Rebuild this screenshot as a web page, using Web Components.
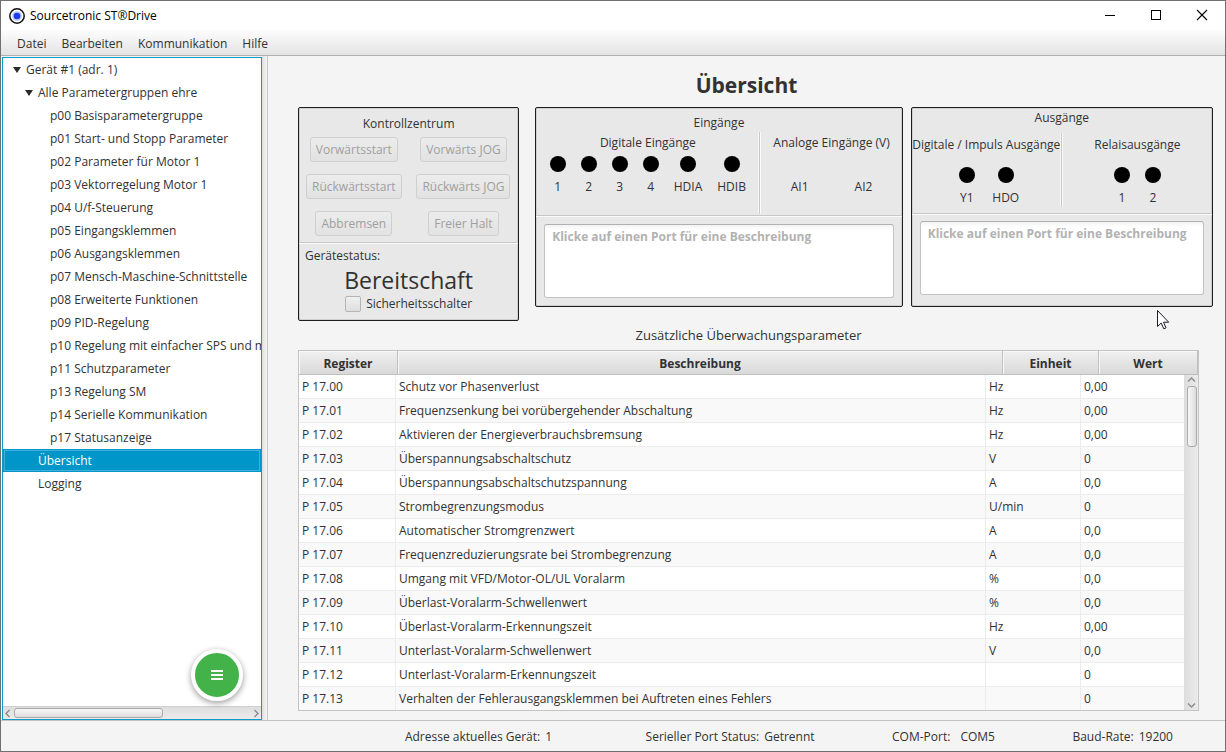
<!DOCTYPE html>
<html lang="de">
<head>
<meta charset="utf-8">
<title>Sourcetronic ST®Drive</title>
<style>
html, body { height: 100%; }
body { margin: 0; font: 12px/16px "Open Sans", "Noto Sans", sans-serif; color: #323232; background: #f4f4f4; }
</style>
</head>
<body>
<app-window></app-window>

<script>
function define(name, html, setup) {
  const template = document.createElement('template');
  template.innerHTML = html;
  customElements.define(name, class extends HTMLElement {
    connectedCallback() {
      if (this.shadowRoot) return;
      const root = this.attachShadow({ mode: 'open' });
      root.append(template.content.cloneNode(true));
      if (setup) setup(root, this);
    }
  });
}

define('title-bar', `
<style>
  :host { display: flex; align-items: center; height: 29px; padding: 0 15px 0 7px; background: #fff; color: #000; }
  .logo { margin-right: 4px; }
  h1 { flex: 1; margin: 0; font: inherit; }
  nav { display: flex; gap: 30px; }
  button { display: block; width: 16px; height: 16px; padding: 0; border: 0; background: none; }
  button svg { display: block; }
</style>
<svg class="logo" width="18" height="18" viewBox="0 0 18 18" aria-hidden="true">
  <circle cx="9" cy="9" r="7.2" fill="#fff" stroke="#111" stroke-width="1.5"/>
  <circle cx="9" cy="9" r="4.8" fill="#b9c6ff"/><circle cx="9" cy="9" r="3.3" fill="#1c3cf0"/>
</svg>
<h1>Sourcetronic ST®Drive</h1>
<nav>
  <button aria-label="Minimieren"><svg width="16" height="16"><path d="M3 7.500h10" stroke="#000"/></svg></button>
  <button aria-label="Maximieren"><svg width="16" height="16"><rect x="3.500" y="2.500" width="9" height="9" fill="none" stroke="#000"/></svg></button>
  <button aria-label="Schließen"><svg width="16" height="16"><path d="M3 2l10 10M13 2L3 12" stroke="#000" stroke-width="1.100"/></svg></button>
</nav>`);

define('menu-bar', `
<style>
  :host { display: flex; gap: 15px; align-items: flex-end; box-sizing: border-box; height: 26px; padding: 0 0 3px 16px;
    background: linear-gradient(#fdfdfd, #e3e3e3); border-bottom: 1px solid #b0b0b0; }
  button { padding: 0; border: 0; background: none; font: inherit; color: #323232; }
</style>
<button>Datei</button><button>Bearbeiten</button><button>Kommunikation</button><button>Hilfe</button>`);

define('scroll-bar', `
<style>
  :host { display: flex; align-items: center; box-sizing: border-box; background: linear-gradient(#dedede, #ebebeb); height: 13px; }
  i { display: block; box-sizing: border-box; border: 1px solid #a9a9a9; border-radius: 3px; background: linear-gradient(#f8f8f8, #dcdcdc); height: 10px; flex: 0 0 var(--thumb); }
  span { flex: 1; }
  svg { display: block; flex: none; width: 11px; height: 11px; fill: none; stroke: #8a8a8a; stroke-width: 1.400; }
  :host([vertical]) { flex-direction: column; width: 13px; height: auto; background: linear-gradient(90deg, #dedede, #ebebeb); }
  :host([vertical]) i { width: 10px; background: linear-gradient(90deg, #f8f8f8, #dcdcdc); }
  :host([vertical]) svg { transform: rotate(90deg); }
</style>
<svg viewBox="0 0 11 11"><path d="M6.500 2L3 5.500L6.500 9"/></svg><i></i><span></span><svg viewBox="0 0 11 11"><path d="M4.500 2L8 5.500L4.500 9"/></svg>`);

define('tree-item', `
<style>
  :host { display: flex; align-items: center; box-sizing: border-box; height: 23px; white-space: nowrap; padding-left: calc(9px + var(--level, 0) * 12px); border: 0; }
  svg { flex: none; width: 14px; height: 8px; fill: #2b2b2b; visibility: hidden; }
  :host([open]) svg { visibility: visible; }
  :host([selected]) { background: #0096c9; color: #fff; box-shadow: inset 0 0 0 1px #0096c9, inset 0 0 0 2px #3fb0d8; }
</style>
<svg viewBox="0 0 14 8"><path d="M1 1h8L5 7z"/></svg><slot></slot>`,
(root, host) => host.style.setProperty('--level', host.getAttribute('level')));

define('device-tree', `
<style>
  :host { display: flex; flex-direction: column; position: relative; box-sizing: border-box; border: 1px solid #0f9bc8; background: #fff; overflow: hidden; }
  .items { flex: 1; overflow: hidden; }
  scroll-bar { --thumb: 149px; border-top: 1px solid #d0d0d0; flex: none; }
  .fab { position: absolute; right: 18px; bottom: 18px; width: 52px; height: 52px; padding: 0; border: 4px solid #fff; border-radius: 50%; background: #43b249; box-shadow: 0 2px 6px rgba(0,0,0,.4); }
  .fab svg { display: block; margin: auto; }
</style>
<div class="items" role="tree"></div>
<scroll-bar></scroll-bar>
<button class="fab" aria-label="Menü"><svg width="12" height="12"><path d="M0 2h12M0 6h12M0 10h12" stroke="#fff" stroke-width="2"/></svg></button>`,
root => {
  const items = root.querySelector('.items');
  const add = (text, level, flag) => {
    const el = document.createElement('tree-item');
    el.setAttribute('level', level);
    el.setAttribute('role', 'treeitem');
    if (flag) el.setAttribute(flag, '');
    el.textContent = text;
    items.append(el);
  };
  add('Gerät #1 (adr. 1)', 0, 'open');
  add('Alle Parametergruppen ehre', 1, 'open');
  ['p00 Basisparametergruppe', 'p01 Start- und Stopp Parameter', 'p02 Parameter für Motor 1',
   'p03 Vektorregelung Motor 1', 'p04 U/f-Steuerung', 'p05 Eingangsklemmen', 'p06 Ausgangsklemmen',
   'p07 Mensch-Maschine-Schnittstelle', 'p08 Erweiterte Funktionen', 'p09 PID-Regelung',
   'p10 Regelung mit einfacher SPS und me', 'p11 Schutzparameter', 'p13 Regelung SM',
   'p14 Serielle Kommunikation', 'p17 Statusanzeige'].forEach(t => add(t, 2));
  add('Übersicht', 1, 'selected');
  add('Logging', 1);
});

const panelBox = `box-sizing: border-box; border: 1px solid #1e1e1e; border-radius: 2px; background: #e8e8e8; box-shadow: inset 0 0 0 1px #cfcfcf;`;

define('control-panel', `
<style>
  :host { display: block; ${panelBox} }
  h2 { margin: 0; padding: 8px 0 5px; font: inherit; text-align: center; }
  .buttons { display: grid; grid-template-columns: 1fr 1fr; gap: 12px 0; justify-items: center; padding-bottom: 6px; }
  .buttons button { height: 25px; padding: 0 5px; border: 1px solid #cfcfcf; border-radius: 3px; background: linear-gradient(#ececec, #e2e2e2); font: inherit; color: #9f9f9f; white-space: nowrap; }
  .status { border-top: 1px solid #c8c8c8; box-shadow: inset 0 1px #fafafa; padding: 5px 6px 8px; }
  output { display: block; font-size: 23px; line-height: 32px; text-align: center; }
  label { display: flex; justify-content: center; align-items: center; gap: 5px; }
  input { appearance: none; box-sizing: border-box; width: 16px; height: 16px; margin: 0; border: 1px solid #b4b4b4; border-radius: 2px; background: linear-gradient(#f0f0f0, #dedede); }
</style>
<h2>Kontrollzentrum</h2>
<div class="buttons">
  <button disabled>Vorwärtsstart</button><button disabled>Vorwärts JOG</button>
  <button disabled>Rückwärtsstart</button><button disabled>Rückwärts JOG</button>
  <button disabled>Abbremsen</button><button disabled>Freier Halt</button>
</div>
<div class="status">
  <div>Gerätestatus:</div>
  <output>Bereitschaft</output>
  <label><input type="checkbox">Sicherheitsschalter</label>
</div>`);

define('port-lamp', `
<style>
  :host { display: flex; flex-direction: column; align-items: center; gap: 7px; min-width: var(--lamp-width, 16px); }
  i { width: 16px; height: 16px; border-radius: 50%; background: #000; }
  :host([analog]) i { visibility: hidden; }
</style>
<i></i><span><slot></slot></span>`);

define('port-group', `
<style>
  :host { display: flex; flex-direction: column; align-items: center; white-space: nowrap; }
  h3 { margin: 0 0 var(--lamp-top, 5px); font: inherit; }
  div { display: flex; gap: var(--lamp-gap, 15px); }
</style>
<h3></h3><div><slot></slot></div>`,
(root, host) => { root.querySelector('h3').textContent = host.getAttribute('heading'); });

define('io-panel', `
<style>
  :host { display: flex; flex-direction: column; ${panelBox} }
  h2 { margin: 0; padding-top: var(--title-top); font: inherit; text-align: center; }
  .groups { display: grid; grid-template-columns: var(--groups); height: var(--groups-height); margin: var(--groups-margin); }
  .note { border-top: 1px solid #c8c8c8; box-shadow: inset 0 1px #fafafa; padding: var(--note-top) 8px 0; }
  textarea { display: block; box-sizing: border-box; width: 100%; height: 74px; margin: 0; padding: 4px 7px; resize: none; border: 1px solid #c3c3c3; border-top-color: #b0b0b0; border-radius: 3px; background: linear-gradient(#f3f3f3, #fff 5px); font: inherit; font-weight: bold; }
  textarea::placeholder { color: #b2b2b2; opacity: 1; }
  ::slotted(hr) { margin: 0; width: 1px; border: 0; border-left: 1px solid #c8c8c8; background: #fafafa; box-shadow: -1px 0 #f6f6f6; }
  ::slotted(port-group) { padding-top: var(--group-top); }
</style>
<h2></h2>
<div class="groups"><slot></slot></div>
<div class="note"><textarea placeholder="Klicke auf einen Port für eine Beschreibung" aria-label="Beschreibung des Ports" readonly></textarea></div>`,
(root, host) => { root.querySelector('h2').textContent = host.getAttribute('heading'); });

define('monitor-table', `
<style>
  :host { display: grid; grid-template: 24px 1fr / 1fr 13px; box-sizing: border-box; border: 1px solid #c4c4c4; background: #fff; }
  table { grid-area: 1 / 1 / 3 / 3; display: block; }
  thead, tbody { display: block; }
  tr { display: grid; }
  thead tr { grid-template-columns: 99fr 605fr 96fr 99fr; height: 24px; }
  tbody tr { grid-template-columns: 97fr 590fr 95fr 104fr; height: 24px; margin-right: 13px; }
  tbody tr:last-child { height: 23px; }
  th { padding: 0; line-height: 26px; background: linear-gradient(#f0f0f0, #d9d9d9); box-shadow: inset 1px 1px #f8f8f8; border-right: 1px solid #c0c0c0; border-bottom: 1px solid #c0c0c0; box-sizing: border-box; height: 24px; }
  td { box-sizing: border-box; padding: 0 3px; line-height: 23px; border-right: 1px solid #ececec; border-bottom: 1px solid #ececec; white-space: nowrap; overflow: hidden; }
  tr:last-child td { border-bottom: 0; }
  tbody tr:nth-child(even) { background: #f9f9f9; }
  td:last-child { border-right-color: #dcdcdc; }
  scroll-bar { grid-area: 2 / 2; --thumb: 61px; }
</style>
<table>
  <thead><tr><th>Register</th><th>Beschreibung</th><th>Einheit</th><th>Wert</th></tr></thead>
  <tbody></tbody>
</table>
<scroll-bar vertical></scroll-bar>`,
root => {
  const rows = [
    ['Schutz vor Phasenverlust', 'Hz', '0,00'],
    ['Frequenzsenkung bei vorübergehender Abschaltung', 'Hz', '0,00'],
    ['Aktivieren der Energieverbrauchsbremsung', 'Hz', '0,00'],
    ['Überspannungsabschaltschutz', 'V', '0'],
    ['Überspannungsabschaltschutzspannung', 'A', '0,0'],
    ['Strombegrenzungsmodus', 'U/min', '0'],
    ['Automatischer Stromgrenzwert', 'A', '0,0'],
    ['Frequenzreduzierungsrate bei Strombegrenzung', 'A', '0,0'],
    ['Umgang mit VFD/Motor-OL/UL Voralarm', '%', '0,0'],
    ['Überlast-Voralarm-Schwellenwert', '%', '0,0'],
    ['Überlast-Voralarm-Erkennungszeit', 'Hz', '0,00'],
    ['Unterlast-Voralarm-Schwellenwert', 'V', '0,0'],
    ['Unterlast-Voralarm-Erkennungszeit', '', '0'],
    ['Verhalten der Fehlerausgangsklemmen bei Auftreten eines Fehlers', '', '0']
  ];
  const body = root.querySelector('tbody');
  rows.forEach((cells, i) => {
    const tr = body.insertRow();
    ['P 17.' + String(i).padStart(2, '0'), ...cells].forEach(c => { tr.insertCell().textContent = c; });
  });
});

define('status-bar', `
<style>
  :host { display: flex; justify-content: space-between; align-items: center; box-sizing: border-box; height: 31px; padding: 2px 52px 0 33%; border-top: 1px solid #c3c3c3; background: #f4f4f4; white-space: nowrap; }
  div { display: flex; gap: 5px; }
  .address { margin-right: 16px; }
  .port { gap: 10px; }
</style>
<div class="address"><span>Adresse aktuelles Gerät:</span><span>1</span></div>
<div><span>Serieller Port Status:</span><span>Getrennt</span></div>
<div class="port"><span>COM-Port:</span><span>COM5</span></div>
<div><span>Baud-Rate:</span><span>19200</span></div>`);

define('overview-page', `
<style>
  :host { display: block; }
  h1 { margin: 0; padding: 13px 0 6px; font-size: 21px; line-height: 32px; text-align: center; }
  .panels { display: grid; grid-template-columns: 221fr 375fr 302fr; column-gap: 8px; align-items: start; padding: 0 12px 0 30px; }
  .inputs { margin-left: 8px; padding-bottom: 8px; --title-top: 7px; --groups: 223fr 2px 140fr; --groups-height: 82px; --groups-margin: 1px 0 1px; --group-top: 3px; --note-top: 8px; }
  .outputs { padding-bottom: 11px; --title-top: 2px; --groups: 149fr 2px 149fr; --groups-height: 74px; --groups-margin: 7px 0 6px; --group-top: 4px; --lamp-top: 14px; --note-top: 7px; }
  .analog { --lamp-gap: 46px; }
  .pulse { --lamp-gap: 12px; --lamp-width: 27px; }
  h2 { margin: 0; padding: 5px 26px 6px 30px; font: 13px/18px "Open Sans", "Noto Sans", sans-serif; text-align: center; }
  monitor-table { margin: 0 26px 0 30px; }
</style>
<h1>Übersicht</h1>
<div class="panels">
  <control-panel></control-panel>
  <io-panel class="inputs" heading="Eingänge">
    <port-group heading="Digitale Eingänge">
      <port-lamp>1</port-lamp><port-lamp>2</port-lamp><port-lamp>3</port-lamp><port-lamp>4</port-lamp><port-lamp>HDIA</port-lamp><port-lamp>HDIB</port-lamp>
    </port-group>
    <hr>
    <port-group class="analog" heading="Analoge Eingänge (V)">
      <port-lamp analog>AI1</port-lamp><port-lamp analog>AI2</port-lamp>
    </port-group>
  </io-panel>
  <io-panel class="outputs" heading="Ausgänge">
    <port-group class="pulse" heading="Digitale / Impuls Ausgänge">
      <port-lamp>Y1</port-lamp><port-lamp>HDO</port-lamp>
    </port-group>
    <hr>
    <port-group heading="Relaisausgänge">
      <port-lamp>1</port-lamp><port-lamp>2</port-lamp>
    </port-group>
  </io-panel>
</div>
<h2>Zusätzliche Überwachungsparameter</h2>
<monitor-table></monitor-table>`);

define('app-window', `
<style>
  :host { display: flex; flex-direction: column; position: relative; box-sizing: border-box; min-height: 100vh; border: 1px solid #707070; background: #f4f4f4; }
  main { flex: 1; display: flex; padding-left: 1px; }
  device-tree { flex: 0 0 260px; margin-top: 1px; }
  .divider { flex: 0 0 6px; box-sizing: border-box; border-right: 1px solid #c6c6c6; background: linear-gradient(90deg, #dedede, #f4f4f4); }
  overview-page { flex: 1; min-width: 0; padding-bottom: 9px; }
  .pointer { position: absolute; left: 1156px; top: 309px; }
</style>
<title-bar></title-bar>
<menu-bar></menu-bar>
<main>
  <device-tree></device-tree>
  <div class="divider"></div>
  <overview-page></overview-page>
</main>
<status-bar></status-bar>
<svg class="pointer" width="13" height="20" viewBox="0 0 13 20" aria-hidden="true"><path d="M.5.5v16l3.700-3.500 2.600 5.800 2.200-1-2.500-5.600h5.200z" fill="#fff" stroke="#1a1a2a"/></svg>`);
</script>
</body>
</html>
